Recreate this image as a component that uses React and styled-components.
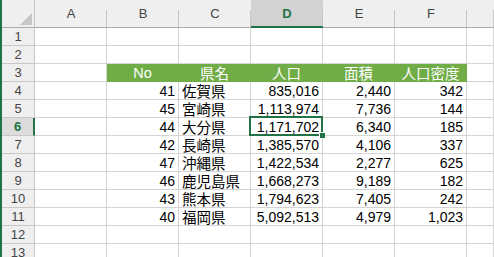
import React from "react";
import styled, { createGlobalStyle, css } from "styled-components";

const GlobalStyle = createGlobalStyle`
  html, body {
    margin: 0;
    padding: 0;
    overflow: hidden;
    background: #fff;
  }
`;

const GREEN = "#217346";
const GRID = "#d4d4d4";
const HEAD_BG = "#efefef";
const HEAD_LINE = "#c8c8c8";

const columns = ["A", "B", "C", "D", "E", "F", ""];
const selectedCol = "D";
const selectedRow = 6;

const prefectures = [
  { no: 41, name: "佐賀県", pop: 835016, area: 2440, density: 342 },
  { no: 45, name: "宮崎県", pop: 1113974, area: 7736, density: 144 },
  { no: 44, name: "大分県", pop: 1171702, area: 6340, density: 185 },
  { no: 42, name: "長崎県", pop: 1385570, area: 4106, density: 337 },
  { no: 47, name: "沖縄県", pop: 1422534, area: 2277, density: 625 },
  { no: 46, name: "鹿児島県", pop: 1668273, area: 9189, density: 182 },
  { no: 43, name: "熊本県", pop: 1794623, area: 7405, density: 242 },
  { no: 40, name: "福岡県", pop: 5092513, area: 4979, density: 1023 },
];

const fmt = (n) => n.toLocaleString("en-US");

const Window = styled.div`
  border-left: 2px solid ${GREEN};
  height: 257px;
  overflow: hidden;
`;

const Sheet = styled.div`
  display: grid;
  grid-template-columns: 33px repeat(6, 72px) 1fr;
  grid-template-rows: 28px repeat(13, 18px);
  font-family: "Liberation Sans", "Noto Sans CJK JP", sans-serif;
`;

const Corner = styled.div`
  background: ${HEAD_BG};
  border-right: 1px solid ${HEAD_LINE};
  border-bottom: 1px solid #ababab;
  box-sizing: border-box;
  display: flex;
  align-items: flex-end;
  justify-content: flex-end;
  padding: 0 2px 2px 0;
`;

const ColHead = styled.div`
  position: relative;
  background: ${({ $active }) => ($active ? "#d2d2d2" : HEAD_BG)};
  border-bottom: ${({ $active }) =>
    $active ? `2px solid ${GREEN}` : "1px solid #ababab"};
  box-sizing: border-box;
  display: flex;
  align-items: center;
  justify-content: center;
  padding-top: ${({ $active }) => ($active ? "1px" : "0")};
  font-size: 13px;
  color: ${({ $active }) => ($active ? GREEN : "#444")};
  font-weight: ${({ $active }) => ($active ? 700 : 400)};

  &::after {
    content: "";
    position: absolute;
    right: 0;
    top: 10px;
    bottom: 0;
    width: 1px;
    background: ${HEAD_LINE};
  }
`;

const RowHead = styled.div`
  background: ${({ $active }) => ($active ? "#dcdcdc" : HEAD_BG)};
  border-right: ${({ $active }) =>
    $active ? `2px solid ${GREEN}` : `1px solid ${HEAD_LINE}`};
  border-bottom: 1px solid ${HEAD_LINE};
  box-sizing: border-box;
  display: flex;
  align-items: center;
  justify-content: center;
  font-size: 13px;
  color: ${({ $active }) => ($active ? GREEN : "#444")};
  font-weight: ${({ $active }) => ($active ? 700 : 400)};
`;

const Cell = styled.div`
  position: relative;
  box-sizing: border-box;
  border-right: 1px solid ${GRID};
  border-bottom: 1px solid ${GRID};
  padding: 0 3px;
  display: flex;
  align-items: flex-end;
  justify-content: ${({ $align }) =>
    $align === "right" ? "flex-end" : $align === "center" ? "center" : "flex-start"};
  font-size: 14px;
  line-height: 16px;
  color: #000;
  white-space: nowrap;
  overflow: visible;

  ${({ $head }) =>
    $head &&
    css`
      background: #70ad47;
      border-right-color: #70ad47;
      border-bottom-color: #70ad47;
      color: #fff;
      font-size: 14.5px;
    `}

  ${({ $selected }) =>
    $selected &&
    css`
      &::before {
        content: "";
        position: absolute;
        left: -2px;
        top: -2px;
        right: -1px;
        bottom: -1px;
        border: 2px solid ${GREEN};
        z-index: 2;
      }
      &::after {
        content: "";
        position: absolute;
        right: -3px;
        bottom: -3px;
        width: 5px;
        height: 5px;
        background: ${GREEN};
        border: 1px solid #fff;
        border-right: none;
        border-bottom: none;
        z-index: 3;
      }
    `}
`;

const Jp = styled.span`
  font-family: "Noto Sans CJK JP", sans-serif;
  font-size: 14.5px;
  line-height: 16px;
`;

function CornerMark() {
  return (
    <svg width="12" height="12" viewBox="0 0 12 12">
      <polygon points="12,0 12,12 0,12" fill="#c6c6c6" />
    </svg>
  );
}

function buildRow(r) {
  if (r === 3) {
    return [
      { text: "" },
      { text: "No", align: "center", head: true },
      { text: "県名", align: "center", head: true, jp: true },
      { text: "人口", align: "center", head: true, jp: true },
      { text: "面積", align: "center", head: true, jp: true },
      { text: "人口密度", align: "center", head: true, jp: true },
      { text: "" },
    ];
  }
  const p = prefectures[r - 4];
  if (!p) return columns.map(() => ({ text: "" }));
  return [
    { text: "" },
    { text: p.no, align: "right" },
    { text: p.name, jp: true },
    { text: fmt(p.pop), align: "right" },
    { text: fmt(p.area), align: "right" },
    { text: fmt(p.density), align: "right" },
    { text: "" },
  ];
}

export default function App() {
  const rows = Array.from({ length: 13 }, (_, i) => i + 1);

  return (
    <>
      <GlobalStyle />
      <Window>
        <Sheet>
          <Corner>
            <CornerMark />
          </Corner>
          {columns.map((c, i) => (
            <ColHead key={`h${i}`} $active={c === selectedCol}>
              {c}
            </ColHead>
          ))}
          {rows.map((r) => (
            <React.Fragment key={r}>
              <RowHead $active={r === selectedRow}>{r}</RowHead>
              {buildRow(r).map((cell, i) => (
                <Cell
                  key={i}
                  $align={cell.align}
                  $head={cell.head}
                  $selected={r === selectedRow && columns[i] === selectedCol}
                >
                  {cell.jp ? <Jp>{cell.text}</Jp> : cell.text}
                </Cell>
              ))}
            </React.Fragment>
          ))}
        </Sheet>
      </Window>
    </>
  );
}
